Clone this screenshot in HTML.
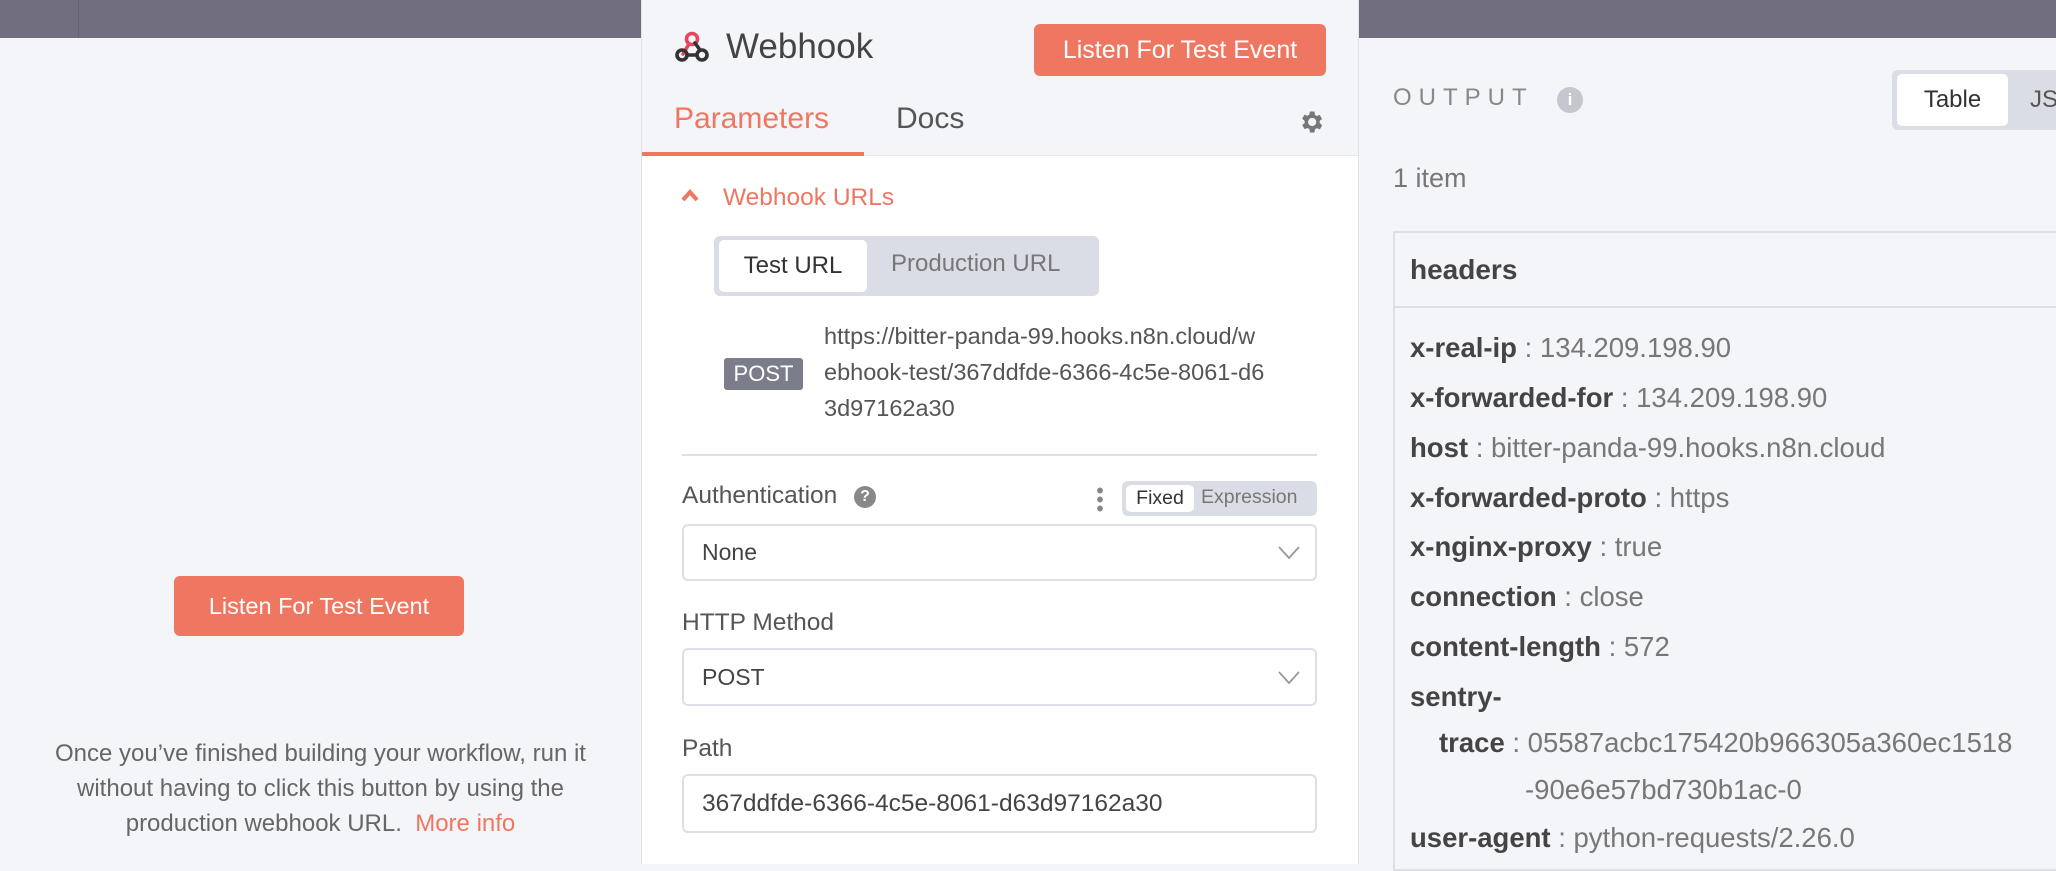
<!DOCTYPE html>
<html><head><meta charset="utf-8"><style>
*{margin:0;padding:0;box-sizing:border-box}
body{width:2056px;height:864px;overflow:hidden;background:#f4f5f8;font-family:"Liberation Sans",sans-serif;color:#555;position:relative}
.a{position:absolute;white-space:nowrap}
.btn{background:#ef7761;color:#fff;border-radius:6px;display:flex;align-items:center;justify-content:center}
.sel{position:absolute;left:682px;width:635px;background:#fff;border:2px solid #dcdfe6;border-radius:6px;font-size:23px;color:#444;padding-left:18px;display:flex;align-items:center}
.row{position:absolute;left:1410px;font-size:27.5px;color:#777;white-space:nowrap}
.row b{color:#444}
</style></head><body>
<div class="a" style="left:0;top:0;width:2056px;height:38px;background:#716f7f"></div>
<div class="a" style="left:0;top:38px;width:2056px;height:826px;background:#f4f5f8;border-radius:16px 0 0 0"></div>
<div class="a" style="left:78px;top:0;width:1px;height:38px;background:#65636f"></div>
<div class="a btn" style="left:174px;top:576px;width:290px;height:60px;font-size:23.5px">Listen For Test Event</div>
<div class="a" style="left:0;width:641px;top:736px;text-align:center;font-size:24px;line-height:35px;color:#666;white-space:nowrap">Once you’ve finished building your workflow, run it<br>without having to click this button by using the<br>production webhook URL. &nbsp;<span style="color:#ef7761">More info</span></div>

<!-- center panel -->
<div class="a" style="left:641px;top:0;width:718px;height:864px;background:#fff;border-left:1px solid #e0e2e8;border-right:1px solid #e0e2e8"></div>
<div class="a" style="left:642px;top:0;width:716px;height:156px;background:#f4f5f8;border-bottom:1px solid #e6e8ee"></div>
<svg class="a" style="left:674px;top:30px" width="36" height="34" viewBox="0 0 36 34"><g fill="none" stroke-width="3.6" stroke-linecap="round">
<circle cx="18" cy="9" r="5.5" stroke="#e5465d"/><path d="M15 14 L9 24" stroke="#e5465d"/>
<circle cx="8" cy="25" r="5" stroke="#333"/><path d="M13 25 H23" stroke="#333"/>
<circle cx="28" cy="25" r="5" stroke="#333"/><path d="M21 13 L26 20" stroke="#333"/></g></svg>
<div class="a" style="left:726px;top:27px;font-size:35px;color:#444">Webhook</div>
<div class="a btn" style="left:1034px;top:24px;width:292px;height:52px;font-size:25px">Listen For Test Event</div>
<div class="a" style="left:674px;top:102px;font-size:30px;color:#ef7761">Parameters</div>
<div class="a" style="left:896px;top:102px;font-size:30px;color:#555">Docs</div>
<div class="a" style="left:642px;top:152px;width:222px;height:4px;background:#ef7761"></div>
<svg class="a" style="left:1297px;top:108px" width="28" height="28" viewBox="0 0 24 24"><path fill="#777" d="M19.4 13a7.5 7.5 0 0 0 0-2l2.1-1.6-2-3.5-2.5 1a7 7 0 0 0-1.7-1L15 3h-4l-.4 2.7a7 7 0 0 0-1.7 1l-2.5-1-2 3.5L6.6 11a7.5 7.5 0 0 0 0 2l-2.1 1.6 2 3.5 2.5-1a7 7 0 0 0 1.7 1L11 21h4l.4-2.7a7 7 0 0 0 1.7-1l2.5 1 2-3.5zM13 15.5a3.5 3.5 0 1 1 0-7 3.5 3.5 0 0 1 0 7z"/></svg>
<svg class="a" style="left:681px;top:188px" width="18" height="14" viewBox="0 0 18 14"><path d="M2 12 L9 4 L16 12" fill="none" stroke="#ef7761" stroke-width="4"/></svg>
<div class="a" style="left:723px;top:184px;font-size:24.5px;color:#ef7761">Webhook URLs</div>
<div class="a" style="left:714px;top:236px;width:385px;height:60px;background:#dadde6;border-radius:6px"></div>
<div class="a" style="left:719px;top:240px;width:148px;height:52px;background:#fff;border-radius:5px;font-size:24px;color:#333;display:flex;align-items:center;justify-content:center">Test URL</div>
<div class="a" style="left:891px;top:250px;font-size:24px;color:#777">Production URL</div>
<div class="a" style="left:724px;top:358px;width:79px;height:32px;background:#7b7e8a;color:#fff;font-size:22px;border-radius:3px;display:flex;align-items:center;justify-content:center">POST</div>
<div class="a" style="left:824px;top:318px;font-size:23.5px;line-height:36px;color:#555">https://bitter-panda-99.hooks.n8n.cloud/w<br>ebhook-test/367ddfde-6366-4c5e-8061-d6<br>3d97162a30</div>
<div class="a" style="left:682px;top:454px;width:635px;height:2px;background:#dcdfe6"></div>
<div class="a" style="left:682px;top:482px;font-size:24.5px;color:#555">Authentication</div>
<div class="a" style="left:854px;top:486px;width:22px;height:22px;border-radius:50%;background:#888;color:#fff;font-size:16px;font-weight:bold;text-align:center;line-height:22px">?</div>
<div class="a" style="left:1097px;top:486px;width:6px;height:26px;background:radial-gradient(circle,#888 2.8px,transparent 3px) 0 0/6px 9px"></div>
<div class="a" style="left:1122px;top:481px;width:195px;height:35px;background:#dadde6;border-radius:6px"></div>
<div class="a" style="left:1126px;top:485px;width:68px;height:27px;background:#fff;border-radius:5px;font-size:19.5px;color:#333;text-align:center;line-height:27px">Fixed</div>
<div class="a" style="left:1201px;top:486px;font-size:19.5px;color:#777">Expression</div>
<div class="sel" style="top:524px;height:57px">None</div>
<div class="a" style="left:682px;top:609px;font-size:24.5px;color:#555">HTTP Method</div>
<div class="sel" style="top:648px;height:58px">POST</div>
<div class="a" style="left:682px;top:735px;font-size:24.5px;color:#555">Path</div>
<div class="sel" style="top:774px;height:59px;font-size:24.5px">367ddfde-6366-4c5e-8061-d63d97162a30</div>
<svg class="a" style="left:1278px;top:546px" width="22" height="14"><path d="M1 1 L11 12 L21 1" fill="none" stroke="#999" stroke-width="1.8"/></svg>
<svg class="a" style="left:1278px;top:671px" width="22" height="14"><path d="M1 1 L11 12 L21 1" fill="none" stroke="#999" stroke-width="1.8"/></svg>

<!-- right -->
<div class="a" style="left:1393px;top:84px;font-size:24px;letter-spacing:7px;color:#888">OUTPUT</div>
<div class="a" style="left:1557px;top:87px;width:26px;height:26px;border-radius:50%;background:#c5c7cf;color:#fff;font-size:17px;font-weight:bold;text-align:center;line-height:26px">i</div>
<div class="a" style="left:1892px;top:70px;width:200px;height:60px;background:#dadde6;border-radius:6px"></div>
<div class="a" style="left:1897px;top:74px;width:111px;height:52px;background:#fff;border-radius:5px;font-size:24px;color:#333;text-align:center;line-height:52px">Table</div>
<div class="a" style="left:2030px;top:86px;font-size:24px;color:#555">JSON</div>
<div class="a" style="left:1393px;top:163px;font-size:27px;color:#777">1 item</div>
<div class="a" style="left:1393px;top:231px;width:700px;height:640px;border:2px solid #dcdfe6;border-right:none"></div>
<div class="a" style="left:1395px;top:306px;width:700px;height:2px;background:#dcdfe6"></div>
<div class="a" style="left:1410px;top:254px;font-size:28px;font-weight:bold;color:#444">headers</div>
<div class="row" style="top:332px"><b>x-real-ip</b> : 134.209.198.90</div>
<div class="row" style="top:382px"><b>x-forwarded-for</b> : 134.209.198.90</div>
<div class="row" style="top:432px"><b>host</b> : bitter-panda-99.hooks.n8n.cloud</div>
<div class="row" style="top:482px"><b>x-forwarded-proto</b> : https</div>
<div class="row" style="top:531px"><b>x-nginx-proxy</b> : true</div>
<div class="row" style="top:581px"><b>connection</b> : close</div>
<div class="row" style="top:631px"><b>content-length</b> : 572</div>
<div class="row" style="top:681px"><b>sentry-</b></div>
<div class="row" style="top:727px;left:1439px"><b>trace</b> : 05587acbc175420b966305a360ec1518</div>
<div class="row" style="top:774px;left:1525px">-90e6e57bd730b1ac-0</div>
<div class="row" style="top:822px"><b>user-agent</b> : python-requests/2.26.0</div>
</body></html>
